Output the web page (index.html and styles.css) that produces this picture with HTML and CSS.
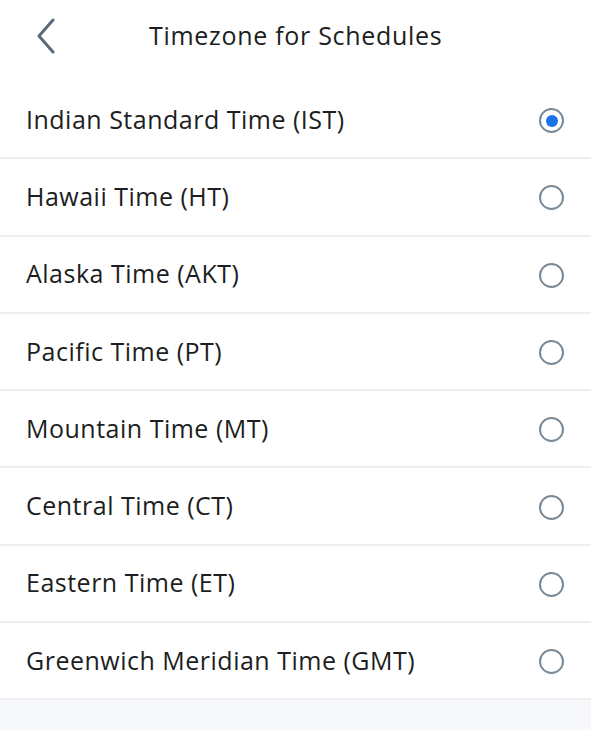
FILE: index.html
```html
<!DOCTYPE html>
<html>
<head>
<link rel="stylesheet" href="styles.css">
</head>
<body>

<div class="header">
  <a class="back" href="#back">
    <svg width="20" height="36" viewBox="0 0 20 36">
      <path d="M17 2 L3 18 L17 34" fill="none" stroke="#5b6b7b" stroke-width="3" stroke-linecap="round" stroke-linejoin="round"/>
    </svg>
  </a>
  <h1>Timezone for Schedules</h1>
</div>

<ul class="zones">
  <li class="selected"><span>Indian Standard Time (IST)</span><i class="radio"></i></li>
  <li><span>Hawaii Time (HT)</span><i class="radio"></i></li>
  <li><span>Alaska Time (AKT)</span><i class="radio"></i></li>
  <li><span>Pacific Time (PT)</span><i class="radio"></i></li>
  <li><span>Mountain Time (MT)</span><i class="radio"></i></li>
  <li><span>Central Time (CT)</span><i class="radio"></i></li>
  <li><span>Eastern Time (ET)</span><i class="radio"></i></li>
  <li><span>Greenwich Meridian Time (GMT)</span><i class="radio"></i></li>
</ul>

</body>
</html>
```

FILE: styles.css
```css
body {
  margin: 0;
  background-color: #f7f8fa;
  font-family: "Open Sans", sans-serif;
  color: #1c1e21;
}

.header {
  height: 82px;
  display: flex;
  align-items: center;
  background-color: white;
}

.back {
  display: flex;
  margin-left: 36px;
  margin-top: -10px;
}

.header h1 {
  margin: 0 0 0 93px;
  margin-top: -12px;
  font-size: 25px;
  font-weight: 500;
  letter-spacing: 0.7px;
}

.zones {
  list-style-type: none;
  margin: 0;
  padding: 0;
  background-color: white;
}

.zones li {
  height: 75.3px;
  border-bottom: 2px solid #eceef1;
  display: flex;
  align-items: center;
  justify-content: space-between;
  padding: 0 27px 0 26px;
  font-size: 25px;
  letter-spacing: 0.5px;
}

.zones li span {
  margin-top: -2px;
}

.radio {
  width: 21px;
  height: 21px;
  margin-top: 2px;
  border: 2.5px solid #7a8996;
  border-radius: 50%;
  display: flex;
  align-items: center;
  justify-content: center;
}

.selected .radio::after {
  content: "";
  width: 12px;
  height: 12px;
  border-radius: 50%;
  background-color: #1a73e8;
}
```
